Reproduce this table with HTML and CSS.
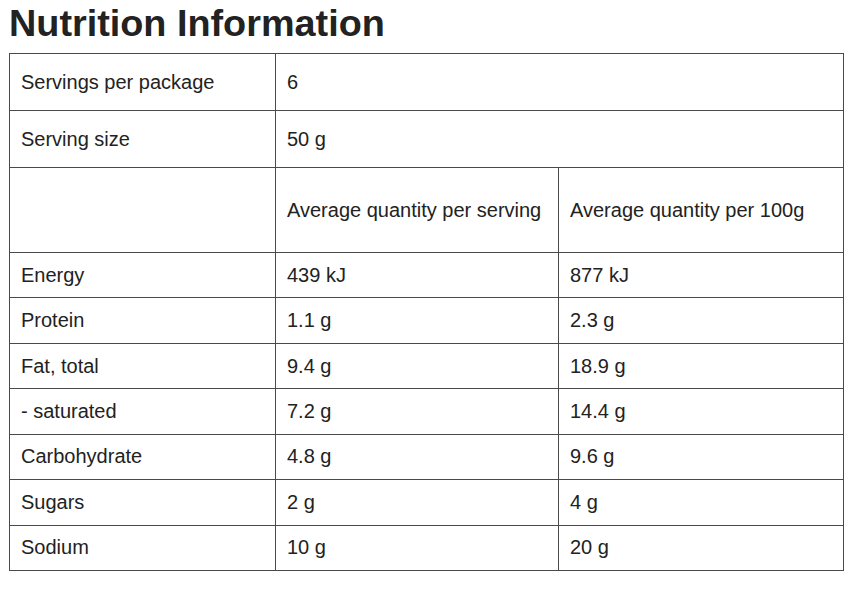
FILE: index.html
```html
<!DOCTYPE html>
<html lang="en">
<head>
<meta charset="utf-8">
<title>Nutrition Information</title>
<link rel="stylesheet" href="styles.css">
</head>
<body>
<h1 class="title">Nutrition Information</h1>
<table class="nutrition">
  <colgroup>
    <col class="c1">
    <col class="c2">
    <col class="c3">
  </colgroup>
  <tbody>
    <tr class="tall"><td>Servings per package</td><td colspan="2">6</td></tr>
    <tr class="tall"><td>Serving size</td><td colspan="2">50 g</td></tr>
    <tr class="head"><td></td><td>Average quantity per serving</td><td>Average quantity per 100g</td></tr>
    <tr class="row"><td>Energy</td><td>439 kJ</td><td>877 kJ</td></tr>
    <tr class="row"><td>Protein</td><td>1.1 g</td><td>2.3 g</td></tr>
    <tr class="row"><td>Fat, total</td><td>9.4 g</td><td>18.9 g</td></tr>
    <tr class="row"><td>- saturated</td><td>7.2 g</td><td>14.4 g</td></tr>
    <tr class="row"><td>Carbohydrate</td><td>4.8 g</td><td>9.6 g</td></tr>
    <tr class="row"><td>Sugars</td><td>2 g</td><td>4 g</td></tr>
    <tr class="row"><td>Sodium</td><td>10 g</td><td>20 g</td></tr>
  </tbody>
</table>
</body>
</html>
```
FILE: styles.css
```css
html, body {
  margin: 0;
  padding: 0;
  background: #ffffff;
}
body {
  padding: 0 9px;
  font-family: "Liberation Sans", Arial, sans-serif;
  color: #222222;
}
.title {
  margin: 0;
  padding-top: 2px;
  font-size: 37.8px;
  line-height: 42px;
  font-weight: bold;
  color: #222222;
}
.nutrition {
  margin-top: 9px;
  width: 834px;
  table-layout: fixed;
  border-collapse: collapse;
  border: 1px solid #6f6f6f;
  font-size: 20px;
}
.c1 { width: 266px; }
.c2 { width: 283px; }
.c3 { width: 285px; }
.nutrition td {
  border: 1px solid #4a4a4a;
  padding: 0 11px;
  vertical-align: middle;
  line-height: 23px;
}
.tall { height: 57px; }
.head { height: 85px; }
.row { height: 45.43px; }
```
